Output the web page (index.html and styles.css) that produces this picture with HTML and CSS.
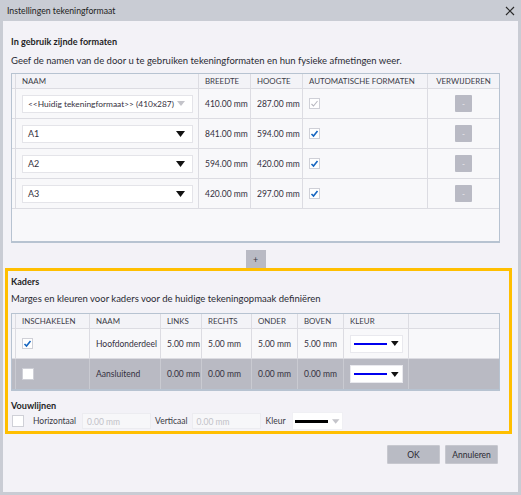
FILE: index.html
```html
<!DOCTYPE html>
<html>
<head>
    <meta charset="UTF-8">
    <title>Instellingen tekeningformaat</title>
    <link rel="stylesheet" href="styles.css">
</head>
<body>
    <div class="window">
        <div class="titlebar">
            <span>Instellingen tekeningformaat</span>
            <svg class="close" width="10" height="10" viewBox="0 0 10 10"><path d="M1 1L9 9M9 1L1 9" stroke="#2b2b2b" stroke-width="1.2"/></svg>
        </div>

        <div class="content">
            <div class="heading">In gebruik zijnde formaten</div>
            <div class="intro">Geef de namen van de door u te gebruiken tekeningformaten en hun fysieke afmetingen weer.</div>

            <div class="table formats">
                <div class="row head">
                    <div class="gutter"></div>
                    <div class="cell">NAAM</div>
                    <div class="cell">BREEDTE</div>
                    <div class="cell">HOOGTE</div>
                    <div class="cell">AUTOMATISCHE FORMATEN</div>
                    <div class="cell center">VERWIJDEREN</div>
                </div>
                <div class="row">
                    <div class="gutter"></div>
                    <div class="cell"><div class="select disabled"><span>&lt;&lt;Huidig tekeningformaat&gt;&gt; (410x287)</span><svg width="8" height="5" viewBox="0 0 8 5"><path d="M0 0H8L4 5Z" fill="#c4c4ca"/></svg></div></div>
                    <div class="cell">410.00 mm</div>
                    <div class="cell">287.00 mm</div>
                    <div class="cell"><span class="check disabled"><svg width="9" height="9" viewBox="0 0 9 9"><path d="M1.5 5L3.5 7L7.5 2" fill="none" stroke="#b8b8c0" stroke-width="1.1"/></svg></span></div>
                    <div class="cell center"><button class="small-btn">-</button></div>
                </div>
                <div class="row">
                    <div class="gutter"></div>
                    <div class="cell"><div class="select"><span>A1</span><svg width="9" height="6" viewBox="0 0 9 6"><path d="M0 0H9L4.5 6Z" fill="#111"/></svg></div></div>
                    <div class="cell">841.00 mm</div>
                    <div class="cell">594.00 mm</div>
                    <div class="cell"><span class="check"><svg width="9" height="9" viewBox="0 0 9 9"><path d="M1.5 5L3.5 7L7.5 2" fill="none" stroke="#1565c0" stroke-width="1.6"/></svg></span></div>
                    <div class="cell center"><button class="small-btn">-</button></div>
                </div>
                <div class="row">
                    <div class="gutter"></div>
                    <div class="cell"><div class="select"><span>A2</span><svg width="9" height="6" viewBox="0 0 9 6"><path d="M0 0H9L4.5 6Z" fill="#111"/></svg></div></div>
                    <div class="cell">594.00 mm</div>
                    <div class="cell">420.00 mm</div>
                    <div class="cell"><span class="check"><svg width="9" height="9" viewBox="0 0 9 9"><path d="M1.5 5L3.5 7L7.5 2" fill="none" stroke="#1565c0" stroke-width="1.6"/></svg></span></div>
                    <div class="cell center"><button class="small-btn">-</button></div>
                </div>
                <div class="row">
                    <div class="gutter"></div>
                    <div class="cell"><div class="select"><span>A3</span><svg width="9" height="6" viewBox="0 0 9 6"><path d="M0 0H9L4.5 6Z" fill="#111"/></svg></div></div>
                    <div class="cell">420.00 mm</div>
                    <div class="cell">297.00 mm</div>
                    <div class="cell"><span class="check"><svg width="9" height="9" viewBox="0 0 9 9"><path d="M1.5 5L3.5 7L7.5 2" fill="none" stroke="#1565c0" stroke-width="1.6"/></svg></span></div>
                    <div class="cell center"><button class="small-btn">-</button></div>
                </div>
            </div>

            <div class="add-row"><button class="add-btn">+</button></div>

            <div class="highlight">
                <div class="heading">Kaders</div>
                <div class="intro">Marges en kleuren voor kaders voor de huidige tekeningopmaak definiëren</div>

                <div class="table frames">
                    <div class="row head">
                        <div class="gutter"></div>
                        <div class="cell">INSCHAKELEN</div>
                        <div class="cell">NAAM</div>
                        <div class="cell">LINKS</div>
                        <div class="cell">RECHTS</div>
                        <div class="cell">ONDER</div>
                        <div class="cell">BOVEN</div>
                        <div class="cell">KLEUR</div>
                        <div class="cell"></div>
                    </div>
                    <div class="row">
                        <div class="gutter"></div>
                        <div class="cell"><span class="check"><svg width="9" height="9" viewBox="0 0 9 9"><path d="M1.5 5L3.5 7L7.5 2" fill="none" stroke="#1565c0" stroke-width="1.6"/></svg></span></div>
                        <div class="cell">Hoofdonderdeel</div>
                        <div class="cell">5.00 mm</div>
                        <div class="cell">5.00 mm</div>
                        <div class="cell">5.00 mm</div>
                        <div class="cell">5.00 mm</div>
                        <div class="cell"><div class="color-select"><span class="line blue"></span><svg width="8" height="5" viewBox="0 0 8 5"><path d="M0 0H8L4 5Z" fill="#111"/></svg></div></div>
                        <div class="cell"></div>
                    </div>
                    <div class="row selected">
                        <div class="gutter"></div>
                        <div class="cell"><span class="check big"></span></div>
                        <div class="cell">Aansluitend</div>
                        <div class="cell">0.00 mm</div>
                        <div class="cell">0.00 mm</div>
                        <div class="cell">0.00 mm</div>
                        <div class="cell">0.00 mm</div>
                        <div class="cell"><div class="color-select"><span class="line blue"></span><svg width="8" height="5" viewBox="0 0 8 5"><path d="M0 0H8L4 5Z" fill="#111"/></svg></div></div>
                        <div class="cell"></div>
                    </div>
                </div>

                <div class="subheading">Vouwlijnen</div>
                <div class="fold-row">
                    <span class="check big"></span>
                    <span class="label first">Horizontaal</span>
                    <span class="field">0.00 mm</span>
                    <span class="label">Verticaal</span>
                    <span class="field">0.00 mm</span>
                    <span class="label color">Kleur</span>
                    <div class="color-select flat"><span class="line black"></span><svg width="8" height="5" viewBox="0 0 8 5"><path d="M0 0H8L4 5Z" fill="#c4c4ca"/></svg></div>
                </div>
            </div>

            <div class="buttons">
                <button class="dialog-btn">OK</button>
                <button class="dialog-btn">Annuleren</button>
            </div>
        </div>
    </div>
</body>
</html>
```

FILE: styles.css
```css
body {
    margin: 0;
    font-family: Lato, "Open Sans", sans-serif;
    font-size: 9.5px;
    color: #2a2a33;
}

.window {
    width: 521px;
    height: 495px;
    box-sizing: border-box;
    background: #c9ccd4;
    padding: 0 3px 3px;
    display: flex;
    flex-direction: column;
}

.titlebar {
    height: 21px;
    flex-shrink: 0;
    display: flex;
    align-items: center;
    justify-content: space-between;
    padding: 0 3px 0 4px;
    font-size: 8.7px;
    color: #222;
}

.content {
    flex: 1;
    background: #f3f2f7;
    padding: 14px 18px 0 8px;
}

.heading {
    height: 14px;
    line-height: 14px;
    font-size: 9.1px;
    font-weight: bold;
    color: #1f1f26;
}

.intro {
    height: 14px;
    line-height: 14px;
    margin-top: 5px;
}

.table {
    margin-top: 5px;
    border: 1px solid #b7c3d1;
    border-bottom-width: 2px;
    background: #f8f8fa;
    font-size: 8.5px;
    color: #34303e;
}

.formats {
    height: 170px;
    box-sizing: border-box;
}

.row {
    display: grid;
    height: 30px;
    border-bottom: 1px solid #dcdce2;
    box-sizing: border-box;
}

.formats .row {
    grid-template-columns: 4px 183px 52px 52px 125px 1fr;
}

.frames .row {
    grid-template-columns: 4px 74px 71px 41px 50px 46px 46px 65px 1fr;
}

.frames .row:last-child {
    border-bottom: none;
}

.row.head {
    height: 15px;
    background: #f3f3f7;
    font-size: 7.9px;
    color: #3c3c48;
}

.gutter,
.cell {
    border-right: 1px solid #dcdce2;
}

.cell {
    display: flex;
    align-items: center;
    padding-left: 6px;
    white-space: nowrap;
    overflow: hidden;
}

.cell:last-child {
    border-right: none;
}

.cell.center {
    justify-content: center;
    padding-left: 0;
}

.row.selected {
    background: #b9bac3;
}

.row.selected .cell,
.row.selected .gutter {
    border-right-color: #c9cad1;
}

.select {
    width: 171px;
    height: 18px;
    box-sizing: border-box;
    background: #fff;
    border: 1px solid #e4e4e9;
    display: flex;
    align-items: center;
    justify-content: space-between;
    padding: 0 7px 0 5px;
    font-size: 9px;
}

.select.disabled {
    font-size: 8.4px;
}

.check {
    width: 11px;
    height: 11px;
    box-sizing: border-box;
    background: #fff;
    border: 1px solid #cfd0d7;
    display: inline-flex;
    align-items: center;
    justify-content: center;
}

.check.big {
    width: 12px;
    height: 12px;
}

.small-btn {
    width: 17px;
    height: 17px;
    border: none;
    border-radius: 1px;
    background: #b9bac4;
    color: #eeeef2;
    font-size: 8px;
    padding: 0;
    font-family: inherit;
}

.add-row {
    display: flex;
    justify-content: center;
    margin-top: 7px;
}

.add-btn {
    width: 20px;
    height: 18px;
    border: none;
    background: #b9bac4;
    color: #3a3a44;
    font-size: 9px;
    padding: 0;
    font-family: inherit;
}

.highlight {
    margin: 0 -12px 0 -6px;
    border: 3px solid #ffbf00;
    padding: 4px 9px 2px 3px;
}

.highlight .intro {
    margin-top: 3px;
}

.frames {
    margin-top: 7px;
}

.color-select {
    width: 53px;
    height: 18px;
    box-sizing: border-box;
    background: #fff;
    border: 1px solid #e9e9ee;
    display: flex;
    align-items: center;
    padding: 0 3px;
    gap: 4px;
}

.color-select.flat {
    width: 51px;
    border-color: #f0f0f4;
    padding: 0 2px;
}

.line {
    height: 2px;
    width: 35px;
}

.line.blue {
    background: #0000ee;
}

.line.black {
    background: #000;
    height: 3px;
    width: 36px;
}

.subheading {
    margin-top: 8px;
    height: 14px;
    line-height: 14px;
    font-size: 9.1px;
    font-weight: bold;
    color: #1f1f26;
}

.fold-row {
    display: flex;
    align-items: center;
    height: 16px;
    margin-left: 1px;
    font-size: 8.5px;
}

.fold-row .label {
    color: #3a3a44;
    margin: 0 4px;
}

.fold-row .label.first {
    margin: 0 6px 0 9px;
}

.fold-row .label.color {
    margin: 0 6px 0 5px;
}

.field {
    width: 69px;
    height: 16px;
    line-height: 16px;
    box-sizing: border-box;
    background: #f7f7f9;
    border: 1px solid #ececf0;
    padding-left: 4px;
    color: #c2c2c8;
}

.buttons {
    display: flex;
    justify-content: flex-end;
    gap: 5px;
    margin-top: 11px;
    padding-right: 2px;
}

.dialog-btn {
    width: 53px;
    height: 19px;
    border: 1px solid #c7c8cf;
    border-radius: 1px;
    background: #b9bbc4;
    color: #2a2a33;
    font-family: inherit;
    font-size: 8.5px;
    padding: 0;
}
```
